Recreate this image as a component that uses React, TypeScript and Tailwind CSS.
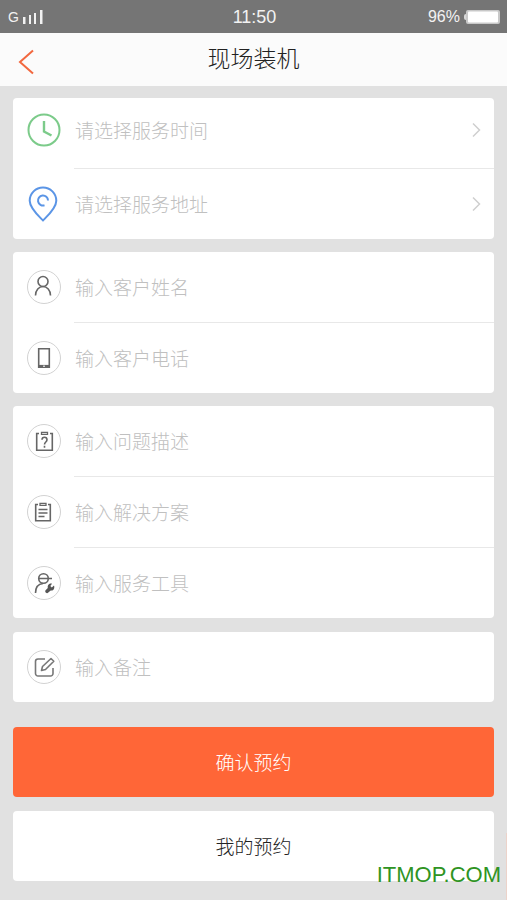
import React from 'react';

function Ring({ children }: { children: React.ReactNode }) {
  return (
    <svg width="34" height="34" viewBox="0 0 34 34" fill="none" stroke="#666" strokeWidth="1.6" aria-hidden="true">
      <circle cx="17" cy="17" r="16.5" stroke="#d2d2d2" strokeWidth="1" />
      {children}
    </svg>
  );
}

const clockIcon = (
  <svg width="34" height="34" viewBox="0 0 34 34" fill="none" stroke="#7ccb8a" strokeWidth="2" aria-hidden="true">
    <circle cx="17" cy="17" r="15.5" />
    <path d="M17 8v10.5l7.5 4" strokeWidth="2.4" />
  </svg>
);

const pinIcon = (
  <svg width="34" height="36" viewBox="0 0 34 36" fill="none" stroke="#5b95e6" strokeWidth="2" strokeLinejoin="round" aria-hidden="true">
    <path d="M16 34.5C11 29.5 2.700 22 2.700 14.700a13.300 13.200 0 0 1 26.600 0C29.300 22 21 29.500 16 34.500z" />
    <path d="M21 14.500a5 5 0 1 0-3.500 4.800" />
  </svg>
);

const personIcon = (
  <Ring>
    <circle cx="16" cy="11.5" r="5" />
    <path d="M8.500 25.500c0-5.500 3.500-9 7.500-9s7.500 3.500 7.500 9" />
  </Ring>
);

const phoneIcon = (
  <Ring>
    <path d="M11.700 7.700h10.600v18.600H11.700z" />
    <path d="M11.500 25.200h11" strokeWidth="2.6" />
    <path d="M16 25.200h2" stroke="#fff" strokeWidth="1" />
  </Ring>
);

const questionIcon = (
  <Ring>
    <path d="M12 9.500H9.700v16.800h15.600V9.500H23" />
    <path d="M14.500 8.300h6v2h-6z" strokeWidth="1.3" />
    <path d="M15 15.800c0-3.500 5-3.500 5 0 0 2.200-2.500 2.200-2.500 4.700M17.500 21.800v2" />
  </Ring>
);

const clipboardIcon = (
  <Ring>
    <path d="M11 9.500H8.700v16.200h14.600V9.500H21" />
    <path d="M13 8.300h6v2h-6z" strokeWidth="1.3" />
    <path d="M11.500 14.500h9M11.500 18h9M11.500 21.500h6" strokeWidth="1.3" />
  </Ring>
);

const workerIcon = (
  <Ring>
    <path d="M11.700 12.500a4.800 4.800 0 0 1 9.600 0a4.800 4.800 0 0 1-9.600 0M11 12.500h14" />
    <path d="M8.500 27c0-5.500 2.500-9 7.500-9.500" />
    <path
      d="M27 19.500l-2.200 2-1.500-1.500 1.700-2.300c-2.800-.5-4.800 1.500-4.200 4.300l-2 2c-1.700 1.700.8 4.300 2.500 2.600l2.400-2.100c2.600.6 4.400-2.200 3.300-5z"
      fill="#555"
      stroke="none"
    />
  </Ring>
);

const editIcon = (
  <Ring>
    <path d="M18 9h-7a2.500 2.500 0 0 0-2.500 2.500v12A2.500 2.500 0 0 0 11 26h12.500a2.500 2.500 0 0 0 2.500-2.500V18" stroke="#777" />
    <path d="M14.500 20.500l1-4 8.500-8 2.800 2.800-8.300 8.200z" stroke="#777" strokeLinejoin="round" />
  </Ring>
);

function Picker({ icon, label, raised }: { icon: React.ReactNode; label: string; raised?: boolean }) {
  return (
    <button
      type="button"
      className={`flex h-[70px] w-full items-center pr-3 pl-3.5 text-left text-[#c0c0c0] ${raised ? 'pb-1.5' : ''}`}
    >
      <span className="w-12 shrink-0">{icon}</span>
      <span className="flex-1 text-[19px]">{label}</span>
      <svg width="10" height="16" viewBox="0 0 10 16" fill="none" stroke="#cfcfcf" strokeWidth="1.5" aria-hidden="true">
        <path d="M1 1.500L7.500 8 1 14.500" />
      </svg>
    </button>
  );
}

function Field({ icon, label, name }: { icon: React.ReactNode; label: string; name: string }) {
  return (
    <label className="flex h-[70px] items-center pr-3 pl-3.5">
      <span className="w-12 shrink-0">{icon}</span>
      <input
        name={name}
        type="text"
        aria-label={label}
        placeholder={label}
        className="h-10 min-w-0 flex-1 bg-transparent pb-0.5 text-[19px] text-[#333] outline-none placeholder:text-[#c0c0c0]"
      />
    </label>
  );
}

function Divider() {
  return <div className="ml-[61px] h-px bg-[#e8e8e8]" />;
}

export default function App() {
  return (
    <div className="relative min-h-screen bg-[#e1e1e1] font-['Noto_Sans_CJK_SC',sans-serif] font-light">
      <div className="grid h-[33px] grid-cols-3 items-center bg-[#757575] pr-1.5 pl-2 font-['Liberation_Sans',sans-serif] font-normal text-[#f2f2f2]">
        <div className="flex items-end gap-1">
          <span className="text-sm leading-4">G</span>
          <svg width="22" height="16" viewBox="0 0 22 16" fill="#f2f2f2" aria-hidden="true">
            <path d="M0 8h2.500v7H0zM6 6h2v9H6zM11 4h2v11h-2zM17 1h2.500v14H17z" />
          </svg>
        </div>
        <div className="text-center text-lg">11:50</div>
        <div className="flex items-center justify-end gap-1">
          <span className="text-base">96%</span>
          <svg width="37" height="16" viewBox="0 0 37 16" aria-hidden="true">
            <rect x="0" y="5" width="4" height="6" rx="2" fill="#d8d8d8" />
            <rect x="2" y="1" width="34" height="14" rx="2" fill="#c8c8c8" />
            <rect x="4" y="2.5" width="30" height="11" rx="1" fill="#fff" />
          </svg>
        </div>
      </div>

      <header className="grid h-[53px] grid-cols-[48px_1fr_48px] items-center bg-[#fbfbfb]">
        <button type="button" aria-label="返回" className="flex h-full items-center pt-1 pl-[18px]">
          <svg width="16" height="26" viewBox="0 0 16 26" fill="none" stroke="#f2683f" strokeWidth="2" aria-hidden="true">
            <path d="M15 1.500L2 13l13 11.500" />
          </svg>
        </button>
        <h1 className="pb-1.5 text-center text-[23px] leading-8 text-[#222]">现场装机</h1>
      </header>

      <main className="flex flex-col gap-3.5 px-[13px] pt-3 pb-[19px]">
        <div className="flex flex-col gap-[13px]">
          <section className="rounded bg-white">
            <Picker icon={clockIcon} label="请选择服务时间" raised />
            <Divider />
            <Picker icon={pinIcon} label="请选择服务地址" />
          </section>
          <section className="rounded bg-white">
            <Field icon={personIcon} label="输入客户姓名" name="customer" />
            <Divider />
            <Field icon={phoneIcon} label="输入客户电话" name="phone" />
          </section>
          <section className="rounded bg-white">
            <Field icon={questionIcon} label="输入问题描述" name="problem" />
            <Divider />
            <Field icon={clipboardIcon} label="输入解决方案" name="solution" />
            <Divider />
            <Field icon={workerIcon} label="输入服务工具" name="tools" />
          </section>
        </div>
        <section className="rounded bg-white">
          <Field icon={editIcon} label="输入备注" name="remark" />
        </section>
        <button type="button" className="mt-[11px] h-[70px] rounded bg-[#ff6637] text-[19px] text-white">
          确认预约
        </button>
        <button type="button" className="h-[70px] rounded bg-white text-[19px] text-[#222]">
          我的预约
        </button>
      </main>

      <div className="absolute right-0 bottom-0 h-[67px] w-px bg-[#ecd3ca]" />
      <div className="absolute right-1.5 bottom-[11px] font-['Liberation_Sans',sans-serif] text-[22px] leading-7 font-normal text-[#2f9423]">
        ITMOP.COM
      </div>
    </div>
  );
}
